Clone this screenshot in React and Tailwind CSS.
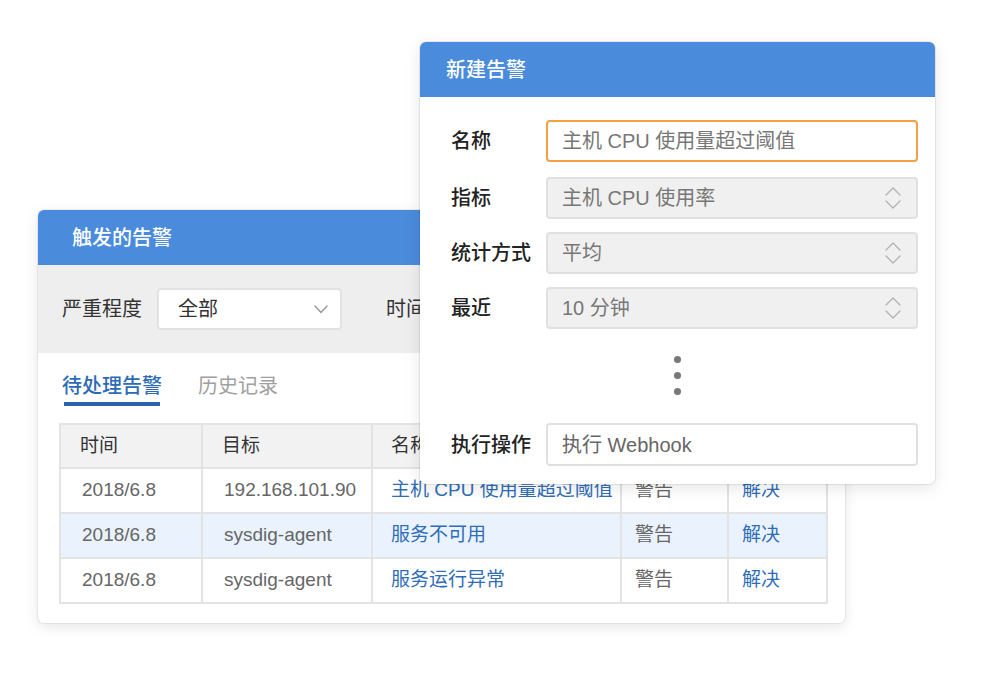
import React from "react";

const rows = [
  { time: "2018/6.8", target: "192.168.101.90", name: "主机 CPU 使用量超过阈值", level: "警告", hl: false },
  { time: "2018/6.8", target: "sysdig-agent", name: "服务不可用", level: "警告", hl: true },
  { time: "2018/6.8", target: "sysdig-agent", name: "服务运行异常", level: "警告", hl: false },
];

const UpDown = () => (
  <svg width="16" height="22" viewBox="0 0 16 22" fill="none" stroke="#b3b3b3" strokeWidth="1.4" strokeLinecap="round" strokeLinejoin="round">
    <path d="M1 8 L8 1 L15 8" />
    <path d="M1 14 L8 21 L15 14" />
  </svg>
);

const Field = ({ label, children }) => (
  <div className="flex items-center">
    <div className="w-[95px] text-[20px] leading-[28px] font-medium text-[#222]">{label}</div>
    {children}
  </div>
);

const SelectBox = ({ value }) => (
  <div className="w-[372px] h-[42px] flex items-center justify-between pl-[14px] pr-[15px] bg-[#f0f0f0] border-2 border-[#e0e0e0] rounded-[4px]">
    <span className="text-[20px] leading-[28px] text-[#777]">{value}</span>
    <UpDown />
  </div>
);

export default function App() {
  return (
    <div className="relative w-[1000px] h-[680px] bg-white overflow-hidden font-['Liberation_Sans','Noto_Sans_CJK_SC',sans-serif]">
      {/* 触发的告警 */}
      <div className="absolute left-[38px] top-[210px] w-[807px] h-[413px] bg-white rounded-[6px] overflow-hidden shadow-[0_0_0_1px_rgba(0,0,0,0.06),0_4px_14px_rgba(0,0,0,0.1)]">
        <div className="h-[55px] bg-[#4a8bdb] flex items-center pl-[34px]">
          <span className="text-[20px] leading-[28px] text-white font-medium">触发的告警</span>
        </div>
        <div className="h-[88px] bg-[#eeeeee] flex items-center pl-[24px]">
          <span className="text-[20px] leading-[28px] text-[#333]">严重程度</span>
          <div className="ml-[15px] w-[185px] h-[42px] bg-white border-2 border-[#e2e2e2] rounded-[4px] flex items-center justify-between pl-[19px] pr-[12px]">
            <span className="text-[20px] leading-[28px] text-[#333]">全部</span>
            <svg width="14" height="9" viewBox="0 0 14 9" fill="none" stroke="#9a9a9a" strokeWidth="1.4" strokeLinecap="round" strokeLinejoin="round">
              <path d="M1 1 L7 7.5 L13 1" />
            </svg>
          </div>
          <span className="ml-[44px] text-[20px] leading-[28px] text-[#333]">时间</span>
        </div>
        <div className="pt-[20px] pl-[24px] flex gap-[36px]">
          <div className="flex flex-col items-start">
            <span className="text-[20px] leading-[26px] text-[#2d6cb5] font-medium">待处理告警</span>
            <div className="mt-[3px] ml-[2px] w-[96px] h-[4px] bg-[#2d63a8]" />
          </div>
          <span className="text-[20px] leading-[26px] text-[#a0a0a0]">历史记录</span>
        </div>
        <table className="mt-[17px] ml-[21px] w-[767px] table-fixed border-collapse text-[19px]">
          <colgroup>
            <col className="w-[142px]" />
            <col className="w-[170px]" />
            <col className="w-[249px]" />
            <col className="w-[107px]" />
            <col className="w-[99px]" />
          </colgroup>
          <thead>
            <tr className="h-[44px] bg-[#f2f2f2] text-[#333] text-left">
              <th className="border-2 border-[#e3e3e3] pl-[19px] font-normal">时间</th>
              <th className="border-2 border-[#e3e3e3] pl-[19px] font-normal">目标</th>
              <th className="border-2 border-[#e3e3e3] pl-[18px] font-normal">名称</th>
              <th className="border-2 border-[#e3e3e3]" />
              <th className="border-2 border-[#e3e3e3]" />
            </tr>
          </thead>
          <tbody>
            {rows.map((r, i) => (
              <tr key={i} className={`h-[45px] ${r.hl ? "bg-[#eaf3fd]" : "bg-white"}`}>
                <td className="border-2 border-[#e3e3e3] pl-[21px] text-[#666]">{r.time}</td>
                <td className="border-2 border-[#e3e3e3] pl-[21px] text-[#666]">{r.target}</td>
                <td className="border-2 border-[#e3e3e3] pl-[18px] text-[#2f6db8] whitespace-nowrap overflow-hidden">{r.name}</td>
                <td className="border-2 border-[#e3e3e3] pl-[13px] text-[#666]">{r.level}</td>
                <td className="border-2 border-[#e3e3e3] pl-[13px] text-[#2f6db8]">解决</td>
              </tr>
            ))}
          </tbody>
        </table>
      </div>

      {/* 新建告警 */}
      <div className="absolute left-[420px] top-[42px] w-[515px] h-[442px] bg-white rounded-[6px] overflow-hidden shadow-[0_0_0_1px_rgba(0,0,0,0.07),0_4px_16px_rgba(0,0,0,0.1)]">
        <div className="h-[55px] bg-[#4a8bdb] flex items-center pl-[26px]">
          <span className="text-[20px] leading-[28px] text-white font-medium">新建告警</span>
        </div>
        <div className="pt-[23px] pl-[31px] flex flex-col">
          <Field label="名称">
            <div className="w-[372px] h-[42px] flex items-center pl-[14px] bg-white border-2 border-[#f5a042] rounded-[4px]">
              <span className="text-[20px] leading-[28px] text-[#777]">主机 CPU 使用量超过阈值</span>
            </div>
          </Field>
          <div className="mt-[15px]">
            <Field label="指标">
              <SelectBox value="主机 CPU 使用率" />
            </Field>
          </div>
          <div className="mt-[13px]">
            <Field label="统计方式">
              <SelectBox value="平均" />
            </Field>
          </div>
          <div className="mt-[13px]">
            <Field label="最近">
              <SelectBox value="10 分钟" />
            </Field>
          </div>
          <div className="mt-[27px] h-[67px] -ml-[31px] w-[515px] flex flex-col items-center gap-[9px]">
            <div className="w-[7px] h-[7px] rounded-full bg-[#777]" />
            <div className="w-[7px] h-[7px] rounded-full bg-[#777]" />
            <div className="w-[7px] h-[7px] rounded-full bg-[#777]" />
          </div>
          <Field label="执行操作">
            <div className="w-[372px] h-[43px] flex items-center pl-[14px] bg-white border-2 border-[#e0e0e0] rounded-[4px]">
              <span className="text-[20px] leading-[28px] text-[#666]">执行 Webhook</span>
            </div>
          </Field>
        </div>
      </div>
    </div>
  );
}
